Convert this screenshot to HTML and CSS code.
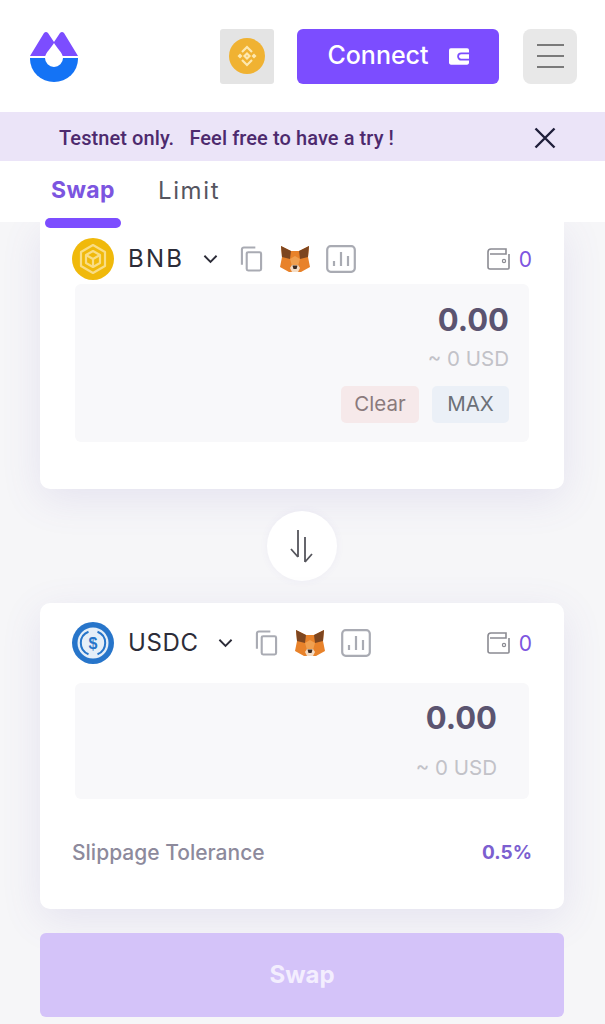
FILE: index.html
```html
<!DOCTYPE html>
<html lang="en">
<head>
<meta name="viewport" content="width=device-width, initial-scale=1.0">
  <title>Swap</title>
  <link rel="stylesheet" href="styles.css">
</head>
<body>

  <svg class="defs" width="0" height="0">
    <symbol id="copy" viewBox="0 0 24 26">
      <path d="M2 19V3a2 2 0 0 1 2-2h12" fill="none" stroke="#a9abb3" stroke-width="2.2"/>
      <rect x="7" y="6" width="15" height="19" rx="1.5" fill="none" stroke="#a9abb3" stroke-width="2.2"/>
    </symbol>
    <symbol id="fox" viewBox="0 0 30 28">
      <path d="M1 1l10 5h8l10-5-1 11 2 10-9 5H9l-9-5 2-10z" fill="#e8822a"/>
      <path d="M1 1l10 5-1 8-8-2z" fill="#7d4620"/>
      <path d="M29 1L19 6l1 8 8-2z" fill="#7d4620"/>
      <path d="M10 14l5-3 5 3-2 7h-6z" fill="#f0a050"/>
      <path d="M10 23l2-3h6l2 3-2 4h-6z" fill="#f4dcc4"/>
      <path d="M12.5 20.5h5l-1 3.5h-3z" fill="#3a2a22"/>
    </symbol>
    <symbol id="chart" viewBox="0 0 30 28">
      <rect x="1.2" y="1.2" width="27.6" height="25.6" rx="3.5" fill="none" stroke="#a9abb3" stroke-width="2.2"/>
      <path d="M8 21v-5M15 21V7M22 21V11" stroke="#a9abb3" stroke-width="2.2" fill="none"/>
    </symbol>
    <symbol id="purse" viewBox="0 0 24 22">
      <path d="M22 6V20a1 1 0 0 1-1 1H3a2 2 0 0 1-2-2V4a3 3 0 0 1 3-3h15v5H3" fill="none" stroke="#8b8b92" stroke-width="1.6"/>
      <circle cx="17" cy="13" r="1.6" fill="none" stroke="#8b8b92" stroke-width="1.2"/>
    </symbol>
    <symbol id="chev" viewBox="0 0 16 10">
      <path d="M1.5 1.5L8 8l6.5-6.5" fill="none" stroke="#2c2c38" stroke-width="2"/>
    </symbol>
  </svg>

  <header class="cabecera">
    <svg class="logo" viewBox="0 0 48 52">
      <path d="M0 26L14 3q2-2 4 0l6 9 6-9q2-2 4 0l14 23z" fill="#7c4dff"/>
      <path d="M0 28h48v1a24 23 0 0 1-48 0z" fill="#1473f5"/>
      <path d="M24 13c2 4 9 10 9 15a9 9 0 0 1-18 0c0-5 7-11 9-15z" fill="#fff"/>
    </svg>
    <div class="red">
      <svg class="moneda-red" viewBox="0 0 36 36">
        <circle cx="18" cy="18" r="18" fill="#f0b232"/>
        <g fill="none" stroke="#fde8b0" stroke-width="2.2">
          <path d="M13 14l5-5 5 5"/>
          <path d="M13 22l5 5 5-5"/>
          <path d="M15.5 18l2.500-2.500 2.500 2.500-2.500 2.500z"/>
        </g>
        <path d="M11 15.500l2.500 2.500-2.500 2.500L8.500 18zM25 15.500l2.500 2.500-2.500 2.500-2.500-2.500z" fill="#fde8b0"/>
      </svg>
    </div>
    <button class="conectar">
      <span class="conectar-texto">Connect</span>
      <svg class="cartera" viewBox="0 0 22 18">
        <rect width="22" height="18" rx="2" fill="#fff"/>
        <path d="M22 5.500H13.500a3.500 3.500 0 0 0 0 7H22" fill="none" stroke="#7c4dff" stroke-width="2"/>
      </svg>
    </button>
    <button class="menu"><span></span><span></span><span></span></button>
  </header>

  <div class="aviso">
    <p>Testnet only.&nbsp;&nbsp; Feel free to have a try !</p>
    <svg class="cerrar" viewBox="0 0 22 22">
      <path d="M1.5 1.5l19 19M20.5 1.5l-19 19" stroke="#1f1f3a" stroke-width="2.4" fill="none"/>
    </svg>
  </div>

  <nav class="pestanas">
    <a class="activa">Swap</a>
    <a class="limite">Limit</a>
    <div class="subrayado"></div>
  </nav>

  <main class="contenedor">
    <section class="tarjeta tarjeta-origen">
      <div class="fila">
        <svg class="moneda" viewBox="0 0 42 42">
          <circle cx="21" cy="21" r="21" fill="#f0b90b"/>
          <g fill="none" stroke="#f9dd85" stroke-width="2.2" stroke-linejoin="round">
            <path d="M21 7l12 7v14l-12 7-12-7V14z"/>
            <path d="M21 13l7 4v8l-7 4-7-4v-8z"/>
            <path d="M14 17l7 4 7-4M21 21v8"/>
          </g>
        </svg>
        <span class="simbolo simbolo-bnb">BNB</span>
        <svg class="chevron"><use href="#chev"/></svg>
        <svg class="copiar"><use href="#copy"/></svg>
        <svg class="zorro"><use href="#fox"/></svg>
        <svg class="grafico"><use href="#chart"/></svg>
        <div class="saldo"><svg class="monedero"><use href="#purse"/></svg><span>0</span></div>
      </div>
      <div class="caja">
        <div class="cantidad">0.00</div>
        <div class="usd">~ 0 USD</div>
        <div class="acciones">
          <button class="limpiar">Clear</button>
          <button class="maximo">MAX</button>
        </div>
      </div>
    </section>

    <button class="invertir">
      <svg viewBox="0 0 26 34">
        <path d="M9 1v27M2 20l7 8M16 33V8M16 33l7-8" fill="none" stroke="#55555c" stroke-width="1.8"/>
      </svg>
    </button>

    <section class="tarjeta tarjeta-destino">
      <div class="fila">
        <svg class="moneda" viewBox="0 0 42 42">
          <circle cx="21" cy="21" r="21" fill="#2775ca"/>
          <circle cx="21" cy="21" r="15.5" fill="#e6eff8"/>
          <path d="M16.500 9.800a12 12 0 0 0 0 22.400M25.500 9.800a12 12 0 0 1 0 22.400" fill="none" stroke="#2775ca" stroke-width="2"/>
          <text class="dolar" x="21" y="26.500" text-anchor="middle">$</text>
        </svg>
        <span class="simbolo">USDC</span>
        <svg class="chevron"><use href="#chev"/></svg>
        <svg class="copiar"><use href="#copy"/></svg>
        <svg class="zorro"><use href="#fox"/></svg>
        <svg class="grafico"><use href="#chart"/></svg>
        <div class="saldo"><svg class="monedero"><use href="#purse"/></svg><span>0</span></div>
      </div>
      <div class="caja caja-destino">
        <div class="cantidad">0.00</div>
        <div class="usd">~ 0 USD</div>
      </div>
      <div class="deslizamiento">
        <span>Slippage Tolerance</span>
        <strong>0.5%</strong>
      </div>
    </section>

    <button class="intercambiar">Swap</button>
  </main>

</body>
</html>
```

FILE: styles.css
```css
* {
  margin: 0;
  padding: 0;
  box-sizing: border-box;
}

body {
  height: 1024px;
  overflow: hidden;
  background: #f6f6f8;
  font-family: Inter, "Open Sans", sans-serif;
  color: #2c2c38;
}

button {
  border: none;
  font-family: inherit;
}

.defs {
  position: absolute;
}

.cabecera {
  height: 112px;
  background: #fff;
  display: flex;
  align-items: center;
  padding: 0 28px 0 30px;
}

.logo {
  width: 48px;
  height: 52px;
  margin-right: 142px;
}

.red {
  width: 54px;
  height: 55px;
  background: #e4e4e4;
  border-radius: 3px;
  display: flex;
  align-items: center;
  justify-content: center;
  margin-right: 23px;
}

.moneda-red {
  width: 36px;
  height: 36px;
}

.conectar {
  width: 202px;
  height: 55px;
  background: #7c4dff;
  color: #fff;
  border-radius: 6px;
  font-size: 25px;
  font-weight: 500;
  display: flex;
  align-items: center;
  justify-content: center;
  gap: 20px;
  margin-right: 24px;
}

.conectar-texto {
  padding-bottom: 3px;
}

.cartera {
  width: 20px;
  height: 17px;
}

.menu {
  width: 54px;
  height: 55px;
  background: #e8e8e8;
  border-radius: 8px;
  display: flex;
  flex-direction: column;
  align-items: center;
  justify-content: center;
  gap: 9px;
}

.menu span {
  width: 27px;
  height: 2px;
  background: #7a7a7a;
}

.aviso {
  height: 49px;
  background: #ebe4f8;
  display: flex;
  align-items: center;
  justify-content: space-between;
  padding: 2px 49px 0 59px;
  font-family: Roboto, sans-serif;
  font-size: 20px;
  font-weight: 500;
  letter-spacing: 0.09px;
  color: #4d2a6e;
}

.cerrar {
  width: 22px;
  height: 22px;
}

.pestanas {
  height: 61px;
  background: #fff;
  position: relative;
  display: flex;
  align-items: center;
  gap: 43px;
  padding: 0 0 3px 51px;
  font-size: 23px;
  color: #55555f;
}

.activa {
  color: #7c55e0;
  font-weight: 700;
  letter-spacing: 0.4px;
}

.limite {
  font-size: 24px;
  letter-spacing: 1.6px;
}

.subrayado {
  position: absolute;
  left: 45px;
  bottom: -6px;
  width: 76px;
  height: 10px;
  border-radius: 5px;
  background: #7c4dff;
}

.contenedor {
  padding: 0 41px 0 40px;
  display: flex;
  flex-direction: column;
}

.tarjeta {
  background: #fff;
  border-radius: 0 0 10px 10px;
  box-shadow: 0 10px 40px rgba(110, 90, 180, 0.12);
}

.tarjeta-origen {
  height: 267px;
  padding: 16px 32px 0;
}

.tarjeta-destino {
  height: 306px;
  border-radius: 10px;
  padding: 19px 32px 0;
}

.fila {
  height: 42px;
  display: flex;
  align-items: center;
}

.moneda {
  width: 42px;
  height: 42px;
  margin-right: 14px;
}

.dolar {
  font-family: "Liberation Sans", sans-serif;
  font-size: 16px;
  font-weight: 700;
  fill: #2775ca;
}

.simbolo {
  font-size: 24px;
  letter-spacing: 0.6px;
  padding-bottom: 2px;
  color: #2c2c38;
}

.simbolo-bnb {
  letter-spacing: 2.2px;
}

.chevron {
  width: 15px;
  height: 10px;
  margin-left: 19px;
}

.copiar {
  width: 23px;
  height: 26px;
  margin-left: 22px;
}

.zorro {
  width: 30px;
  height: 28px;
  margin-left: 17px;
}

.grafico {
  width: 30px;
  height: 28px;
  margin-left: 16px;
}

.saldo {
  margin-left: auto;
  display: flex;
  align-items: center;
  gap: 8px;
  font-size: 21px;
  color: #7c55e0;
}

.monedero {
  width: 24px;
  height: 22px;
}

.caja {
  margin: 4px 3px 0;
  height: 158px;
  background: #f8f8fa;
  border-radius: 6px;
  padding: 18px 20px 0;
  text-align: right;
}

.cantidad {
  font-size: 31px;
  font-weight: 700;
  line-height: 36px;
  color: #5b5470;
}

.usd {
  font-size: 20.5px;
  line-height: 24px;
  margin-top: 9px;
  color: #c2c2c8;
}

.acciones {
  display: flex;
  justify-content: flex-end;
  gap: 13px;
  margin-top: 15px;
}

.acciones button {
  height: 37px;
  padding-bottom: 2px;
  border-radius: 5px;
  font-size: 20.5px;
}

.limpiar {
  width: 78px;
  background: #f6e9ea;
  color: #8a7a7c;
}

.maximo {
  width: 77px;
  background: #ebf0f7;
  color: #6c7078;
}

.caja-destino {
  margin-top: 19px;
  height: 116px;
  padding: 17px 32px 0;
}

.caja-destino .usd {
  margin-top: 20px;
}

.deslizamiento {
  display: flex;
  justify-content: space-between;
  align-items: center;
  margin-top: 41px;
  font-size: 21px;
  font-weight: 500;
  color: #8d8a9c;
}

.deslizamiento strong {
  font-size: 19px;
  font-weight: 700;
  color: #7c5fd0;
}

.invertir {
  width: 70px;
  height: 70px;
  border-radius: 50%;
  background: #fff;
  align-self: center;
  margin: 22px 0;
  display: flex;
  align-items: center;
  justify-content: center;
  box-shadow: 0 0 8px rgba(110, 90, 180, 0.06);
}

.invertir svg {
  width: 26px;
  height: 34px;
}

.intercambiar {
  height: 84px;
  margin-top: 24px;
  padding-bottom: 2px;
  background: #d4c3f9;
  border-radius: 6px;
  color: #f3eefe;
  font-size: 24px;
  font-weight: 700;
}
```
